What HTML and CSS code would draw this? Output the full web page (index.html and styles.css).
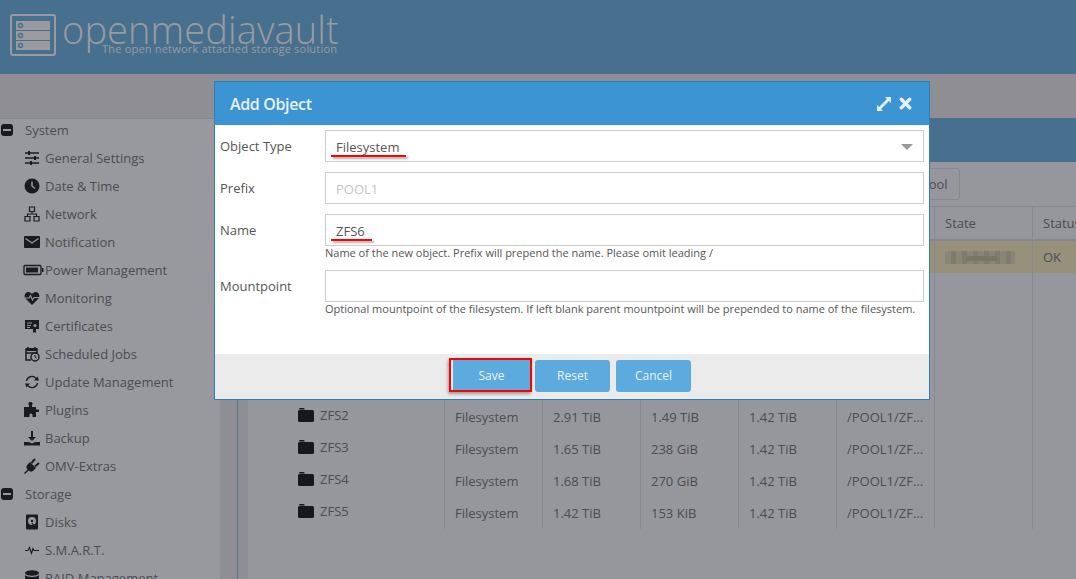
FILE: index.html
```html
<!DOCTYPE html>
<html lang="en">
<head>
    <meta charset="UTF-8">
    <meta name="viewport" content="width=device-width, initial-scale=1.0">
    <title>openmediavault</title>
    <link rel="stylesheet" href="styles.css">
</head>
<body>
    <header class="top-header">
        <svg class="logo-icon" width="48" height="44" viewBox="0 0 48 44">
            <rect x="1" y="1" width="44" height="40" rx="2" fill="none" stroke="#9b9b9f" stroke-width="2"/>
            <rect x="6" y="7" width="34" height="9" fill="#9b9b9f"/>
            <rect x="6" y="17" width="34" height="9" fill="#9b9b9f"/>
            <rect x="6" y="27" width="34" height="9" fill="#9b9b9f"/>
            <circle cx="10.500" cy="11.500" r="2" fill="none" stroke="#47708f" stroke-width="1.500"/>
            <circle cx="10.500" cy="21.500" r="2" fill="none" stroke="#47708f" stroke-width="1.500"/>
            <circle cx="10.500" cy="31.500" r="2" fill="none" stroke="#47708f" stroke-width="1.500"/>
        </svg>
        <div class="logo-text">
            <div class="logo-name">openmediavault</div>
            <div class="logo-tag">The open network attached storage solution</div>
        </div>
    </header>
    <div class="top-band"></div>

    <div class="main">
        <nav class="sidebar">
            <div class="nav-group">
                <svg class="group-icon" width="12" height="12" viewBox="0 0 12 12"><rect width="12" height="12" rx="3" fill="#1a1b20"/><rect x="2" y="5" width="8" height="2" fill="#98999e"/></svg>
                System
            </div>
            <div class="nav-item">
                <svg class="icon" viewBox="0 0 16 16"><path d="M1 3h14M1 8h14M1 13h14" stroke="#1a1b20" stroke-width="1.300" fill="none"/><rect x="4" y="1" width="2" height="4" fill="#1a1b20"/><rect x="10" y="6" width="2" height="4" fill="#1a1b20"/><rect x="6" y="11" width="2" height="4" fill="#1a1b20"/></svg>
                General Settings
            </div>
            <div class="nav-item">
                <svg class="icon" viewBox="0 0 16 16"><circle cx="8" cy="8" r="7.500" fill="#1a1b20"/><path d="M8 3.500V8l3 2.500" stroke="#98999e" stroke-width="1.500" fill="none"/></svg>
                Date &amp; Time
            </div>
            <div class="nav-item">
                <svg class="icon" viewBox="0 0 16 16"><path d="M5.500 1h5v4.500h-5zM1 10.500h5V15H1zM10 10.500h5V15h-5zM8 5.500V8M3.500 10.500V8h9v2.500" stroke="#1a1b20" stroke-width="1.200" fill="none"/></svg>
                Network
            </div>
            <div class="nav-item">
                <svg class="icon" viewBox="0 0 16 16"><rect y="2" width="16" height="12" rx="1" fill="#1a1b20"/><path d="M1.500 4.500 8 9l6.500-4.500" stroke="#98999e" stroke-width="1.300" fill="none"/></svg>
                Notification
            </div>
            <div class="nav-item">
                <svg class="icon icon-wide" viewBox="0 0 21 12"><rect x="1" y="1.500" width="17" height="9" rx="1" fill="none" stroke="#1a1b20" stroke-width="1.300"/><rect x="3" y="3.500" width="12" height="5" fill="#1a1b20"/><rect x="19" y="4" width="1.500" height="4" fill="#1a1b20"/></svg>
                Power Management
            </div>
            <div class="nav-item">
                <svg class="icon" viewBox="0 0 16 16"><path d="M8 15 1.500 8.500C-.5 6 1 2 4.300 2 6 2 7.300 3 8 4c.7-1 2-2 3.700-2C15 2 16.500 6 14.500 8.500z" fill="#1a1b20"/><path d="M1 8h4l1.500-2.500L8.500 10 10 7.500h5" stroke="#98999e" stroke-width="1.100" fill="none"/></svg>
                Monitoring
            </div>
            <div class="nav-item">
                <svg class="icon" viewBox="0 0 16 16"><path d="M1 2h14v9h-3v4l-1.500-1L9 15v-4H1z" fill="#1a1b20"/><path d="M3 5h5M3 7.500h4M3 9.500h3" stroke="#98999e" stroke-width="1"/><circle cx="11" cy="7.500" r="1.500" fill="#98999e"/></svg>
                Certificates
            </div>
            <div class="nav-item">
                <svg class="icon" viewBox="0 0 16 16"><path d="M2 3h11v4H2zM4 1v2M11 1v2M2 7v7h5" stroke="#1a1b20" stroke-width="1.500" fill="none"/><path d="M2 2h11v3H2z" fill="#1a1b20"/><circle cx="11" cy="11" r="4" fill="#98999e" stroke="#1a1b20" stroke-width="1.400"/><path d="M11 9v2l1.500 1" stroke="#1a1b20" fill="none"/></svg>
                Scheduled Jobs
            </div>
            <div class="nav-item">
                <svg class="icon" viewBox="0 0 16 16"><path d="M2.500 7a5.500 5.500 0 0 1 9.500-2.800M13.500 9A5.500 5.500 0 0 1 4 11.800" stroke="#1a1b20" stroke-width="1.400" fill="none"/><path d="M15 6.500h-5L13.500 2.500zM1 9.500h5l-3.500 4z" fill="#1a1b20"/></svg>
                Update Management
            </div>
            <div class="nav-item">
                <svg class="icon" viewBox="0 0 16 16"><path d="M0 5h5V3a2 2 0 1 1 3 0v2h4v2.500h1.500a1.300 1.300 0 1 1 0 2.500H12V15H8.500v-2a1.500 1.500 0 0 0-3 0v2H0z" fill="#1a1b20"/></svg>
                Plugins
            </div>
            <div class="nav-item">
                <svg class="icon" viewBox="0 0 16 16"><path d="M7 1h2v6h3L8 11 4 7h3zM0 12h5l3 1.500 3-1.500h5v3.500H0z" fill="#1a1b20"/></svg>
                Backup
            </div>
            <div class="nav-item">
                <svg class="icon" viewBox="0 0 16 16"><path d="M6 4 12 10 9.500 12.500C8 14 6 14 4.500 12.500L1 16 0 15 3.500 11.500C2 10 2 8 3.500 6.500z" fill="#1a1b20"/><path d="M7.500 5 11 1M11 8.500 15 5" stroke="#1a1b20" stroke-width="2"/></svg>
                OMV-Extras
            </div>
            <div class="nav-group">
                <svg class="group-icon" width="12" height="12" viewBox="0 0 12 12"><rect width="12" height="12" rx="3" fill="#1a1b20"/><rect x="2" y="5" width="8" height="2" fill="#98999e"/></svg>
                Storage
            </div>
            <div class="nav-item">
                <svg class="icon" viewBox="0 0 16 16"><rect x="2" y="0.500" width="12" height="15" rx="1" fill="#1a1b20"/><circle cx="8" cy="7" r="4" fill="#98999e"/><circle cx="8" cy="7" r="1.200" fill="#1a1b20"/><path d="M8 9l2 3" stroke="#1a1b20" stroke-width="1.200"/></svg>
                Disks
            </div>
            <div class="nav-item">
                <svg class="icon" viewBox="0 0 16 16"><path d="M1 8.500h3l1.500-3 2 6 1.500-5 1 2h5" stroke="#1a1b20" stroke-width="1.100" fill="none"/></svg>
                S.M.A.R.T.
            </div>
            <div class="nav-item">
                <svg class="icon" viewBox="0 0 16 16"><ellipse cx="8" cy="3" rx="7" ry="2.800" fill="#1a1b20"/><path d="M1 5c2 2.500 12 2.500 14 0v3.500c-2 2.500-12 2.500-14 0zM1 10c2 2.500 12 2.500 14 0v3c-2 3-12 3-14 0z" fill="#1a1b20"/></svg>
                RAID Management
            </div>
        </nav>
        <div class="side-strip"></div>

        <section class="content">
            <div class="panel-title"></div>
            <div class="toolbar">
                <div class="tool-btn">Expand Pool</div>
            </div>
            <table class="grid">
                <thead>
                    <tr><th class="col-name">Name</th><th>Type</th><th>Size</th><th>Used</th><th>Available</th><th>Mountpoint</th><th>State</th><th>Status</th></tr>
                </thead>
                <tbody>
                    <tr class="row-pool"><td></td><td></td><td></td><td></td><td></td><td></td><td><div class="blurred"></div></td><td>OK</td></tr>
                    <tr><td></td><td></td><td></td><td></td><td></td><td></td><td></td><td></td></tr>
                    <tr><td></td><td></td><td></td><td></td><td></td><td></td><td></td><td></td></tr>
                    <tr><td></td><td></td><td></td><td></td><td></td><td></td><td></td><td></td></tr>
                    <tr><td></td><td></td><td></td><td></td><td></td><td></td><td></td><td></td></tr>
                    <tr>
                        <td><div class="tree-name"><svg class="folder" viewBox="0 0 16 14"><path d="M1.500 0h4.500l1 1.500H1zM1.500 2h13A1.500 1.500 0 0 1 16 3.500v9a1.500 1.500 0 0 1-1.500 1.500h-13A1.500 1.500 0 0 1 0 12.500v-9A1.500 1.500 0 0 1 1.500 2z" fill="#17181d"/></svg>ZFS2</div></td>
                        <td>Filesystem</td><td>2.91 TiB</td><td>1.49 TiB</td><td>1.42 TiB</td><td>/POOL1/ZF...</td><td></td><td></td>
                    </tr>
                    <tr>
                        <td><div class="tree-name"><svg class="folder" viewBox="0 0 16 14"><path d="M1.500 0h4.500l1 1.500H1zM1.500 2h13A1.500 1.500 0 0 1 16 3.500v9a1.500 1.500 0 0 1-1.500 1.500h-13A1.500 1.500 0 0 1 0 12.500v-9A1.500 1.500 0 0 1 1.500 2z" fill="#17181d"/></svg>ZFS3</div></td>
                        <td>Filesystem</td><td>1.65 TiB</td><td>238 GiB</td><td>1.42 TiB</td><td>/POOL1/ZF...</td><td></td><td></td>
                    </tr>
                    <tr>
                        <td><div class="tree-name"><svg class="folder" viewBox="0 0 16 14"><path d="M1.500 0h4.500l1 1.500H1zM1.500 2h13A1.500 1.500 0 0 1 16 3.500v9a1.500 1.500 0 0 1-1.500 1.500h-13A1.500 1.500 0 0 1 0 12.500v-9A1.500 1.500 0 0 1 1.500 2z" fill="#17181d"/></svg>ZFS4</div></td>
                        <td>Filesystem</td><td>1.68 TiB</td><td>270 GiB</td><td>1.42 TiB</td><td>/POOL1/ZF...</td><td></td><td></td>
                    </tr>
                    <tr>
                        <td><div class="tree-name"><svg class="folder" viewBox="0 0 16 14"><path d="M1.500 0h4.500l1 1.500H1zM1.500 2h13A1.500 1.500 0 0 1 16 3.500v9a1.500 1.500 0 0 1-1.500 1.500h-13A1.500 1.500 0 0 1 0 12.500v-9A1.500 1.500 0 0 1 1.500 2z" fill="#17181d"/></svg>ZFS5</div></td>
                        <td>Filesystem</td><td>1.42 TiB</td><td>153 KiB</td><td>1.42 TiB</td><td>/POOL1/ZF...</td><td></td><td></td>
                    </tr>
                </tbody>
            </table>
        </section>
    </div>

    <div class="dialog">
        <div class="dialog-head">
            <span class="dialog-title">Add Object</span>
            <svg class="head-icon" width="16" height="16" viewBox="0 0 16 16"><path d="M9 1h6v6l-2-2-8 8 2 2H1V9l2 2 8-8z" fill="#e4eff8"/></svg>
            <svg class="head-icon" width="13" height="13" viewBox="0 0 13 13"><path d="M2.300 2.300l8.400 8.400M10.700 2.300l-8.400 8.400" stroke="#e4eff8" stroke-width="3.400" stroke-linecap="round"/></svg>
        </div>
        <div class="dialog-body">
            <div class="form-row">
                <label class="form-label">Object Type</label>
                <div class="form-field">
                    <div class="input">Filesystem<span class="arrow"></span><span class="scribble scribble-type"></span></div>
                </div>
            </div>
            <div class="form-row">
                <label class="form-label">Prefix</label>
                <div class="form-field">
                    <div class="input input-disabled">POOL1</div>
                </div>
            </div>
            <div class="form-row">
                <label class="form-label">Name</label>
                <div class="form-field">
                    <div class="input">ZFS6<span class="scribble scribble-name"></span></div>
                    <div class="help">Name of the new object. Prefix will prepend the name. Please omit leading /</div>
                </div>
            </div>
            <div class="form-row">
                <label class="form-label">Mountpoint</label>
                <div class="form-field">
                    <div class="input"></div>
                    <div class="help">Optional mountpoint of the filesystem. If left blank parent mountpoint will be prepended to name of the filesystem.</div>
                </div>
            </div>
        </div>
        <div class="dialog-foot">
            <div class="save-mark"><button class="btn btn-save">Save</button></div>
            <button class="btn btn-reset">Reset</button>
            <button class="btn">Cancel</button>
        </div>
    </div>
</body>
</html>
```

FILE: styles.css
```css
body {
    margin: 0;
    height: 579px;
    overflow: hidden;
    font-family: "Open Sans", sans-serif;
    font-size: 13px;
    color: #4b4c50;
    background-color: #96979c;
    display: flex;
    flex-direction: column;
}

/* header */
.top-header {
    height: 74px;
    flex: none;
    background-color: #47708f;
    display: flex;
    align-items: flex-start;
    padding: 14px 0 0 10px;
    box-sizing: border-box;
}

.logo-icon {
    flex: none;
}

.logo-text {
    margin-left: 4px;
    color: #9b9b9f;
}

.logo-name {
    font-size: 38px;
    font-weight: 300;
    line-height: 30px;
    letter-spacing: 0.1px;
}

.logo-tag {
    font-size: 11px;
    line-height: 12px;
    margin: -1px 0 0 40px;
    letter-spacing: 0.2px;
    white-space: nowrap;
}

.top-band {
    height: 44px;
    flex: none;
    background-color: #8f8f93;
}

.main {
    flex: 1;
    display: flex;
    min-height: 0;
}

/* sidebar */
.sidebar {
    width: 220px;
    flex: none;
    background-color: #98999e;
    border-top: 1px solid #87878b;
    box-sizing: border-box;
    overflow: hidden;
    color: #4b4c50;
}

.nav-group,
.nav-item {
    height: 28px;
    display: flex;
    align-items: center;
    white-space: nowrap;
    position: relative;
    top: -3px;
}

.nav-group {
    padding-left: 1px;
}

.group-icon {
    margin-right: 12px;
}

.nav-item {
    padding-left: 24px;
}

.icon {
    width: 16px;
    height: 16px;
    flex: none;
    margin-right: 5px;
}

.icon-wide {
    width: 21px;
    height: 12px;
    margin: 0 1px 0 -1px;
}

.side-strip {
    width: 18px;
    flex: none;
    background-color: #8e8f94;
    border-right: 1px solid #557a99;
    box-sizing: border-box;
}

/* content */
.content {
    flex: 1;
    min-width: 0;
    overflow: hidden;
    border-left: 10px solid #8e8f94;
}

.panel-title {
    height: 44px;
    background-color: #47708f;
}

.toolbar {
    height: 44px;
    box-sizing: border-box;
    padding: 6px 0 0 612px;
}

.tool-btn {
    width: 100px;
    height: 32px;
    box-sizing: border-box;
    border: 1px solid #88898e;
    border-radius: 3px;
    line-height: 30px;
    text-align: center;
    white-space: nowrap;
}

.grid {
    border-collapse: separate;
    border-spacing: 0;
    table-layout: fixed;
    width: 883px;
}

.grid th {
    height: 35px;
    box-sizing: border-box;
    font-weight: 400;
    text-align: left;
    padding: 0 10px;
    border-top: 1px solid #88898e;
    border-right: 1px solid #88898e;
    border-bottom: 2px solid #86878c;
    width: 98px;
    white-space: nowrap;
    overflow: hidden;
}

.grid th.col-name {
    width: 197px;
}

.grid td {
    height: 32px;
    box-sizing: border-box;
    padding: 0 10px;
    border-right: 1px solid #88898e;
    white-space: nowrap;
    overflow: hidden;
}

.row-pool td {
    background-color: #97917b;
}

.blurred {
    width: 70px;
    height: 13px;
    background-color: #87836f;
    background-image:
        linear-gradient(90deg, transparent 0 30%, #78756a 30% 75%, transparent 75%),
        repeating-linear-gradient(90deg, #8a8674 0 6px, #7f7b6d 6px 11px);
    background-size: 100% 5px, 100% 100%;
    background-position: 0 5px, 0 0;
    background-repeat: no-repeat;
}

.tree-name {
    display: flex;
    align-items: center;
    gap: 6px;
    padding-left: 40px;
    position: relative;
    top: -2px;
}

.folder {
    width: 16px;
    height: 14px;
    flex: none;
}

/* dialog */
.dialog {
    position: absolute;
    left: 214px;
    top: 81px;
    width: 716px;
    height: 319px;
    box-sizing: border-box;
    border: 1px solid #2a7fc0;
    background-color: #fff;
    display: flex;
    flex-direction: column;
    color: #555;
}

.dialog-head {
    height: 43px;
    flex: none;
    background-color: #3c94d3;
    display: flex;
    align-items: center;
    padding: 0 17px 0 15px;
}

.dialog-title {
    flex: 1;
    font-size: 16px;
    font-weight: 600;
    letter-spacing: -0.35px;
    color: #e8f1f8;
}

.head-icon {
    margin-left: 7px;
}

.dialog-body {
    flex: 1;
    padding: 5px 5px 0 5px;
}

.form-row {
    display: flex;
    margin-bottom: 10px;
}

.form-label {
    width: 105px;
    flex: none;
    line-height: 32px;
}

.form-field {
    flex: 1;
}

.input {
    height: 32px;
    box-sizing: border-box;
    border: 1px solid #ccc;
    padding: 0 10px;
    line-height: 32px;
    position: relative;
}

.input-disabled {
    color: #c4c4c4;
}

.arrow {
    position: absolute;
    right: 10px;
    top: 13px;
    border-left: 6px solid transparent;
    border-right: 6px solid transparent;
    border-top: 6px solid #999;
}

/* red marks drawn over the screenshot */
.scribble {
    position: absolute;
    left: 5px;
    top: 24px;
    height: 2px;
    background-color: #f00;
    box-shadow: 2px 2px 2px #aaa;
}

.scribble-type {
    width: 75px;
}

.scribble-name {
    width: 41px;
}

.help {
    font-size: 11px;
    line-height: 14px;
    white-space: nowrap;
}

.dialog-foot {
    height: 45px;
    flex: none;
    background-color: #ebebeb;
    display: flex;
    align-items: flex-start;
    padding: 4px 0 0 234px;
    box-sizing: border-box;
}

.save-mark {
    border: 2px solid #f00;
    padding: 0 0 0 2px;
    height: 34px;
    box-sizing: border-box;
    margin-right: 3px;
    box-shadow: -1px 2px 3px #999;
}

.btn {
    width: 75px;
    height: 32px;
    margin-top: 2px;
    padding: 0 0 2px;
    border: none;
    border-radius: 3px;
    background-color: #5caade;
    color: #eaf3fa;
    font-family: "Open Sans", sans-serif;
    font-size: 12px;
    cursor: pointer;
}

.btn-save {
    width: 77px;
    height: 30px;
    margin-top: 0;
    padding: 0;
    border-radius: 0;
}

.btn-reset {
    margin-right: 6px;
}
```
